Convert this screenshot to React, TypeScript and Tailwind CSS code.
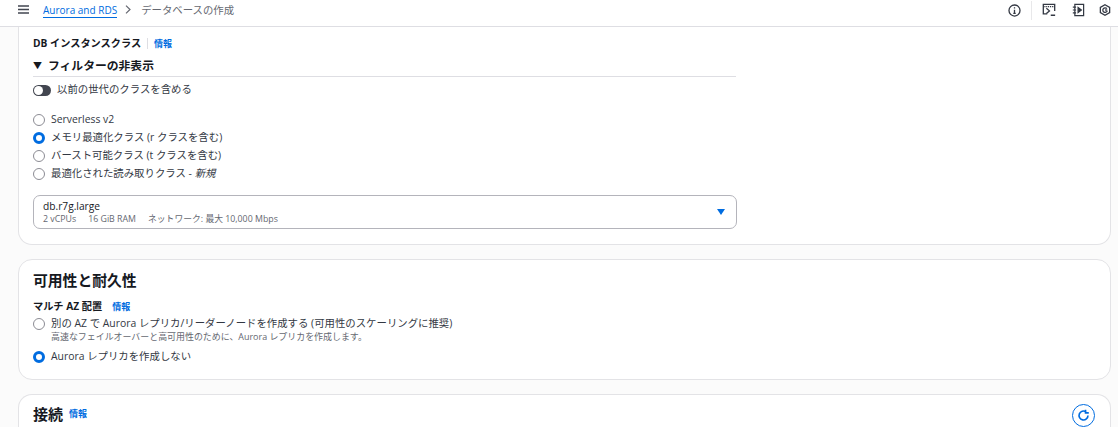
import React from "react";

const font = { fontFamily: '"Open Sans", "Noto Sans CJK JP", sans-serif' };

function Radio({ checked }: { checked?: boolean }) {
  return checked ? (
    <span className="h-3 w-3 shrink-0 rounded-full border-[3.5px] border-[#006ce0] bg-white" />
  ) : (
    <span className="h-3 w-3 shrink-0 rounded-full border border-[#8c8c94] bg-white" />
  );
}

function Info({ className = "" }: { className?: string }) {
  return <span className={`text-[9px] font-semibold text-[#006ce0] ${className}`}>情報</span>;
}

function RadioRow({ checked, children }: { checked?: boolean; children: React.ReactNode }) {
  return (
    <div className="flex h-[18px] items-center gap-[6px] text-[10.4px] text-[#333843]">
      <Radio checked={checked} />
      <span>{children}</span>
    </div>
  );
}

function HeaderIcons() {
  return (
    <div className="flex items-center text-[#333843]">
      <svg width="13" height="13" viewBox="0 0 16 16" fill="none" stroke="currentColor" strokeWidth="1.6">
        <circle cx="8" cy="8" r="6.8" />
        <path d="M8 7v4.5M6.5 11.5h3M8 4v1.6" />
      </svg>
      <span className="ml-[10px] mr-[10px] h-[19px] w-px bg-[#e8e8ea]" />
      <svg width="14" height="14" viewBox="0 0 16 16" fill="none" stroke="currentColor" strokeWidth="1.5">
        <path d="M6 12.5H1.5v-11h13V9" />
        <path d="M1.5 4.2h13" strokeDasharray="1.5 1" />
        <path d="M5 6l3.5 3L5 12M10 14h5" />
      </svg>
      <svg className="ml-[16px]" width="13" height="14" viewBox="0 0 16 16" fill="none" stroke="currentColor" strokeWidth="1.5">
        <path d="M3.5 1.2h10.8v13.6H3.5zM1 4.5h4M1 8h4M1 11.5h4" />
        <path d="M7.5 5l4 3-4 3z" fill="currentColor" />
      </svg>
      <svg className="ml-[14px]" width="12" height="14" viewBox="0 0 16 16" fill="none" stroke="currentColor" strokeWidth="1.7">
        <path d="M8 1l6.2 3.5v7L8 15l-6.2-3.5v-7z" />
        <path d="M10.5 6.3A3 3 0 1 0 11 9" />
        <path d="M8 8h3" />
      </svg>
    </div>
  );
}

export default function App() {
  return (
    <div className="flex h-[427px] w-[1118px] flex-col overflow-hidden bg-[#fbfbfb]" style={font}>
      {/* Top bar */}
      <header className="flex h-[27px] shrink-0 items-center justify-between border-b border-[#dedee3] bg-white pb-[6px] pl-[18px] pr-[7px]">
        <div className="flex items-center">
          <svg width="11" height="9" viewBox="0 0 11 9" stroke="#424650" strokeWidth="1.3">
            <path d="M0 1h11M0 4.5h11M0 8h11" />
          </svg>
          <span className="ml-[14px] mt-[2px] border-b border-[#006ce0] text-[10px] leading-[13px] text-[#006ce0]">Aurora and RDS</span>
          <svg className="ml-[8px]" width="6" height="9" viewBox="0 0 6 9" fill="none" stroke="#656871" strokeWidth="1.2">
            <path d="M1 .6L5 4.5 1 8.4" />
          </svg>
          <span className="ml-[10px] mt-[1px] text-[10.4px] text-[#656871]">データベースの作成</span>
        </div>
        <HeaderIcons />
      </header>

      <main className="flex flex-col gap-[14px] pl-[18px] pr-[7px]">
        {/* DB instance class */}
        <section className="h-[218px] rounded-b-[14px] border border-t-0 border-[#e3e3e6] bg-white pl-[14px]">
          <div className="flex h-[32px] items-center pt-[1px]">
            <span className="text-[10.2px] font-bold text-[#16191f]">DB インスタンスクラス</span>
            <span className="mx-[6px] h-[11px] w-px bg-[#dedee3]" />
            <Info />
          </div>
          <div className="flex h-[14px] w-[703px] items-center gap-[6px] text-[11.8px] font-bold text-[#16191f]">
            <span className="text-[9px]">▼</span>
            <span>フィルターの非表示</span>
          </div>
          <div className="mt-[3px] h-px w-[703px] bg-[#dedee3]" />
          <div className="mt-[5px] flex h-[16px] items-center gap-[6px] text-[10.4px] text-[#333843]">
            <span className="flex h-[11px] w-[18px] items-center rounded-full bg-[#424650] pl-[1px]">
              <span className="h-[9px] w-[9px] rounded-full bg-white" />
            </span>
            <span>以前の世代のクラスを含める</span>
          </div>
          <div className="mt-[13px] flex flex-col">
            <RadioRow>Serverless v2</RadioRow>
            <RadioRow checked>メモリ最適化クラス (r クラスを含む)</RadioRow>
            <RadioRow>バースト可能クラス (t クラスを含む)</RadioRow>
            <RadioRow>
              最適化された読み取りクラス - <em>新規</em>
            </RadioRow>
          </div>
          <div className="mt-[12px] flex h-[34px] w-[704px] items-center justify-between rounded-[7px] border border-[#b4b4bb] pl-[9px] pr-[11px]">
            <div className="flex flex-col">
              <span className="text-[10.2px] leading-[13px] text-[#16191f]">db.r7g.large</span>
              <span className="flex gap-[12px] text-[8.8px] leading-[12px] text-[#656871]">
                <span>2 vCPUs</span>
                <span>16 GiB RAM</span>
                <span>ネットワーク: 最大 10,000 Mbps</span>
              </span>
            </div>
            <span className="h-0 w-0 border-x-[4px] border-t-[6px] border-x-transparent border-t-[#006ce0]" />
          </div>
        </section>

        {/* Availability */}
        <section className="h-[121px] rounded-[14px] border border-[#e3e3e6] bg-white pl-[14px]">
          <h2 className="mt-[10px] text-[14.8px] font-bold leading-[20px] text-[#16191f]">可用性と耐久性</h2>
          <div className="mt-[10px] flex h-[14px] items-center gap-[10px]">
            <span className="text-[10.2px] font-bold text-[#16191f]">マルチ AZ 配置</span>
            <Info />
          </div>
          <div className="mt-[1px]">
            <RadioRow>別の AZ で Aurora レプリカ/リーダーノードを作成する (可用性のスケーリングに推奨)</RadioRow>
            <div className="ml-[18px] -mt-[1px] text-[8.95px] leading-[10px] text-[#656871]">
              高速なフェイルオーバーと高可用性のために、Aurora レプリカを作成します。
            </div>
            <div className="mt-[6px]">
              <RadioRow checked>Aurora レプリカを作成しない</RadioRow>
            </div>
          </div>
        </section>

        {/* Connectivity */}
        <section className="flex h-[60px] items-start justify-between rounded-t-[14px] border border-b-0 border-[#e3e3e6] bg-white pl-[14px] pr-[15px]">
          <div className="mt-[9px] flex items-center gap-[6px]">
            <h2 className="text-[15px] font-bold leading-[20px] text-[#16191f]">接続</h2>
            <Info />
          </div>
          <span className="mt-[9px] flex h-[23px] w-[23px] items-center justify-center rounded-full border-[1.5px] border-[#006ce0]">
            <svg width="13" height="13" viewBox="0 0 16 16" fill="none" stroke="#006ce0" strokeWidth="2">
              <path d="M13.5 8A5.5 5.5 0 1 1 11 3.4" />
              <path d="M10.5 .8v4h4" />
            </svg>
          </span>
        </section>
      </main>
    </div>
  );
}
